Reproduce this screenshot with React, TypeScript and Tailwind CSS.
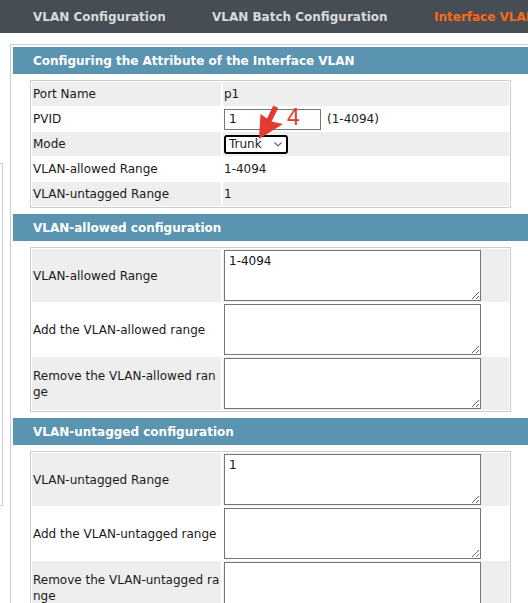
import type { ReactNode } from "react";

const FONT = { fontFamily: '"DejaVu Sans", Verdana, sans-serif' };

const TABS = [
  { label: "VLAN Configuration", width: "w-[179px]", active: false },
  { label: "VLAN Batch Configuration", width: "w-[222px]", active: false },
  { label: "Interface VLAN", width: "w-[120px]", active: true },
];

function SectionHeader({ title }: { title: string }) {
  return (
    <div className="flex h-[27px] items-center bg-[#5a94b1] pl-[20px] text-[12px] font-bold whitespace-nowrap text-white">
      {title}
    </div>
  );
}

function Row({
  label,
  children,
  gray,
  tall,
}: {
  label: ReactNode;
  children: ReactNode;
  gray: boolean;
  tall?: boolean;
}) {
  const bg = gray ? "bg-[#eeeeee]" : "bg-white";
  const h = tall ? "h-[53px]" : "h-[24px]";
  return (
    <>
      <div className={`flex items-center pl-[1px] leading-[16px] whitespace-nowrap ${bg} ${h}`}>
        {label}
      </div>
      <div className={`flex items-center pl-[1px] whitespace-nowrap ${bg} ${h}`}>
        {children}
      </div>
    </>
  );
}

function Table({ children, className = "" }: { children: ReactNode; className?: string }) {
  return (
    <div
      className={`ml-[17px] grid w-[481px] grid-cols-[189px_286px] gap-x-[2px] gap-y-[1px] border border-[#cccccc] p-[1px] ${className}`}
    >
      {children}
    </div>
  );
}

function Area({ value = "" }: { value?: string }) {
  return (
    <textarea
      readOnly
      defaultValue={value}
      className="h-[51px] w-[257px] border border-[#767676] bg-white px-[4px] py-[2px] text-[12px] leading-[16px] text-[#111]"
      style={FONT}
    />
  );
}

export default function App() {
  return (
    <div
      className="relative h-[603px] w-[528px] overflow-hidden bg-white text-[12px] text-[#1a1a1a]"
      style={FONT}
    >
      <nav className="flex h-[33px] items-center bg-[#464d55] pl-[33px] text-[12px] font-bold">
        {TABS.map((t) => (
          <span
            key={t.label}
            className={`shrink-0 whitespace-nowrap ${t.width} ${t.active ? "text-[#ff6a13]" : "text-[#d9dadb]"}`}
          >
            {t.label}
          </span>
        ))}
      </nav>

      <div className="flex items-start">
        <div className="mt-[130px] h-[343px] w-[3px] shrink-0 border-t border-r border-b border-[#cccccc]" />

        <div className="mt-[11px] ml-[7px] h-[600px] w-[540px] shrink-0 border border-[#cccccc] p-[2px]">
          <SectionHeader title="Configuring the Attribute of the Interface VLAN" />
          <Table className="mt-[6px]">
            <Row label="Port Name" gray>
              p1
            </Row>
            <Row label="PVID" gray={false}>
              <input
                readOnly
                defaultValue="1"
                className="h-[21px] w-[97px] border border-[#767676] px-[4px] text-[12px] text-[#111]"
                style={FONT}
              />
              <span className="ml-[6px]">(1-4094)</span>
            </Row>
            <Row label="Mode" gray>
              <div className="flex h-[19px] w-[64px] items-center justify-between rounded-[3px] border-2 border-black bg-white pr-[4px] pl-[3px]">
                <span>Trunk</span>
                <svg width="8" height="5" viewBox="0 0 8 5" fill="none">
                  <path d="M0.5 0.5 L4 4 L7.5 0.5" stroke="#6b6b6b" strokeWidth="1.2" />
                </svg>
              </div>
            </Row>
            <Row label="VLAN-allowed Range" gray={false}>
              1-4094
            </Row>
            <Row label="VLAN-untagged Range" gray>
              1
            </Row>
          </Table>

          <div className="mt-[6px]">
            <SectionHeader title="VLAN-allowed configuration" />
          </div>
          <Table className="mt-[6px]">
            <Row label="VLAN-allowed Range" gray tall>
              <Area value="1-4094" />
            </Row>
            <Row label="Add the VLAN-allowed range" gray={false} tall>
              <Area />
            </Row>
            <Row
              label={
                <span>
                  Remove the VLAN-allowed ran
                  <br />
                  ge
                </span>
              }
              gray
              tall
            >
              <Area />
            </Row>
          </Table>

          <div className="mt-[6px]">
            <SectionHeader title="VLAN-untagged configuration" />
          </div>
          <Table className="mt-[6px]">
            <Row label="VLAN-untagged Range" gray tall>
              <Area value="1" />
            </Row>
            <Row label="Add the VLAN-untagged range" gray={false} tall>
              <Area />
            </Row>
            <Row
              label={
                <span>
                  Remove the VLAN-untagged ra
                  <br />
                  nge
                </span>
              }
              gray
              tall
            >
              <Area />
            </Row>
          </Table>
        </div>
      </div>

      {/* red annotation over the PVID / Mode fields */}
      <svg
        className="absolute top-[100px] left-[250px]"
        width="40"
        height="42"
        viewBox="0 0 40 42"
      >
        <polygon
          points="9,39 10.5,14 17,18.5 23.3,5.5 28.2,8 21.6,21.4 33,24"
          fill="#e53a2f"
        />
      </svg>
      <span
        className="absolute top-[104px] left-[287px] text-[23px] leading-[26px] text-[#e53a2f]"
        style={{ fontFamily: '"Liberation Sans", Arial, sans-serif' }}
      >
        4
      </span>
    </div>
  );
}
